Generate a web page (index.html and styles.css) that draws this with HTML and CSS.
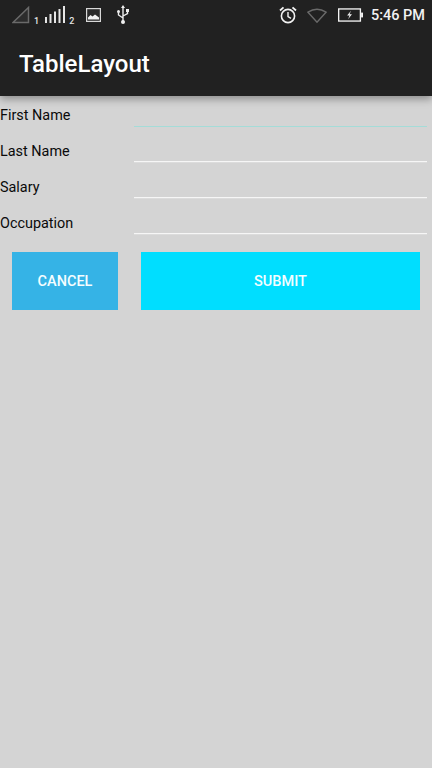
FILE: index.html
```html
<!DOCTYPE html>
<html lang="en">
<head>
    <meta charset="UTF-8">
    <meta name="viewport" content="width=device-width, initial-scale=1.0">
    <title>TableLayout</title>
    <link rel="stylesheet" href="styles.css">
</head>
<body>

    <div id="header">
        <div id="statusbar">
            <div class="status-left">
                <svg class="sig-empty" width="18" height="18" viewBox="0 0 18 18">
                    <path d="M1 16.5 L16.5 1.5 V16.5 Z" fill="#2c2c2c" stroke="#6a6a6a" stroke-width="1.5"/>
                </svg>
                <span class="sim sim-one">1</span>
                <svg class="sig-bars" width="20" height="18" viewBox="0 0 20 18">
                    <rect x="0" y="11" width="2" height="6" fill="#e6e6e6"/>
                    <rect x="4.5" y="8" width="2" height="9" fill="#e6e6e6"/>
                    <rect x="9" y="5.5" width="2" height="11.5" fill="#e6e6e6"/>
                    <rect x="13.5" y="3" width="2" height="14" fill="#e6e6e6"/>
                    <rect x="18" y="0" width="2" height="17" fill="#e6e6e6"/>
                </svg>
                <span class="sim sim-two">2</span>
                <svg class="pic" width="15" height="14" viewBox="0 0 15 14">
                    <rect x="0.6" y="0.6" width="13.8" height="12.8" fill="#2a2a2a" stroke="#d8d8d8" stroke-width="1.2"/>
                    <path d="M2 11.5 V9.5 L4.5 7 L6.5 8.5 L9 6.5 L13 9.5 V11.5 Z" fill="#f2f2f2"/>
                </svg>
                <svg class="usb" width="14" height="20" viewBox="0 0 14 20">
                    <path d="M7 2 V17 M7 13 L2.5 10 V7.5 M7 11 L11.5 8.5 V6.5" fill="none" stroke="#f0f0f0" stroke-width="1.4"/>
                    <path d="M7 0 L9 3 H5 Z" fill="#f0f0f0"/>
                    <circle cx="7" cy="17" r="2" fill="#f0f0f0"/>
                    <circle cx="2.5" cy="6.5" r="1.5" fill="#f0f0f0"/>
                    <rect x="10" y="4" width="3" height="3" fill="#f0f0f0"/>
                </svg>
            </div>
            <div class="status-right">
                <svg class="alarm" width="18" height="18" viewBox="0 0 18 18">
                    <circle cx="9" cy="10" r="6.6" fill="none" stroke="#f2f2f2" stroke-width="1.6"/>
                    <path d="M9 6 V10.5 L12 12.3" fill="none" stroke="#f2f2f2" stroke-width="1.4"/>
                    <path d="M1 4.5 L4.5 1.3 M17 4.5 L13.5 1.3" stroke="#f2f2f2" stroke-width="1.8"/>
                </svg>
                <svg class="wifi" width="20" height="15" viewBox="0 0 21 15">
                    <path d="M1 4 Q10.5 -2 20 4 L10.5 14.5 Z" fill="none" stroke="#6a6a6a" stroke-width="1.5"/>
                </svg>
                <svg class="battery" width="25" height="14" viewBox="0 0 26 14">
                    <rect x="0.7" y="0.7" width="22.6" height="12.6" fill="none" stroke="#f2f2f2" stroke-width="1.4"/>
                    <rect x="24" y="4.5" width="2" height="5" fill="#f2f2f2"/>
                    <path d="M13.5 2.5 L9.5 7.5 H12 L10.5 11.5 L14.5 6.3 H12 Z" fill="#f2f2f2"/>
                </svg>
                <span id="clock">5:46 PM</span>
            </div>
        </div>
        <div id="toolbar">
            <h1 id="title">TableLayout</h1>
        </div>
    </div>

    <div id="form">
        <div class="row">
            <label>First Name</label>
            <div class="field focused"></div>
        </div>
        <div class="row">
            <label>Last Name</label>
            <div class="field"></div>
        </div>
        <div class="row">
            <label>Salary</label>
            <div class="field"></div>
        </div>
        <div class="row">
            <label>Occupation</label>
            <div class="field"></div>
        </div>
        <div id="buttons">
            <button id="cancel">CANCEL</button>
            <button id="submit">SUBMIT</button>
        </div>
    </div>

</body>
</html>
```

FILE: styles.css
```css
body {
    margin: 0;
    height: 768px;
    overflow: hidden;
    background-color: #d4d4d4;
    font-family: 'Roboto', sans-serif;
}

#header {
    height: 96px;
    background-color: #212121;
    box-shadow: 0 3px 8px rgba(0, 0, 0, 0.35);
}

#statusbar {
    height: 30px;
    display: flex;
    justify-content: space-between;
    align-items: center;
    padding-right: 7px;
    color: #f2f2f2;
}

.status-left, .status-right {
    display: flex;
    align-items: center;
    height: 30px;
}

.sig-empty {
    margin-left: 12px;
}

.sim {
    font-size: 9px;
    font-weight: 500;
    align-self: flex-end;
    color: #e6e6e6;
    margin-bottom: 4px;
}

.sim-one {
    margin-left: 4px;
}

.sig-bars {
    margin-left: 6px;
}

.sim-two {
    margin-left: 4px;
}

.pic {
    margin-left: 12px;
}

.usb {
    margin-left: 15px;
}

.alarm {
    margin-right: 10px;
}

.wifi {
    margin-right: 11px;
}

.battery {
    margin-right: 8px;
}

#clock {
    font-size: 14.5px;
    font-weight: 500;
}

#toolbar {
    height: 66px;
    display: flex;
    align-items: center;
    padding-left: 19px;
}

#title {
    margin: 2px 0 0;
    color: white;
    font-size: 24px;
    font-weight: 500;
}

#form {
    padding-top: 1px;
}

.row {
    display: flex;
    height: 36px;
}

.row label {
    width: 134px;
    padding-top: 10px;
    font-size: 14.4px;
    line-height: 18px;
    color: #0a0a0a;
}

.field {
    width: 293px;
    height: 28px;
    border-bottom: 1px solid #f6f6f6;
    box-shadow: 0 1px 0 rgba(255, 255, 255, 0.2);
}

.focused {
    height: 29px;
    border-bottom: 1px solid #a4dcd8;
    box-shadow: none;
}

#buttons {
    display: flex;
    justify-content: space-between;
    margin: 11px 12px 0;
}

button {
    height: 58px;
    border: none;
    padding: 0;
    color: #f4fdff;
    font-family: 'Roboto', sans-serif;
    font-size: 14.5px;
    font-weight: 500;
}

#cancel {
    width: 106px;
    background-color: #35b3e6;
}

#submit {
    width: 279px;
    background-color: #00deff;
}
```
